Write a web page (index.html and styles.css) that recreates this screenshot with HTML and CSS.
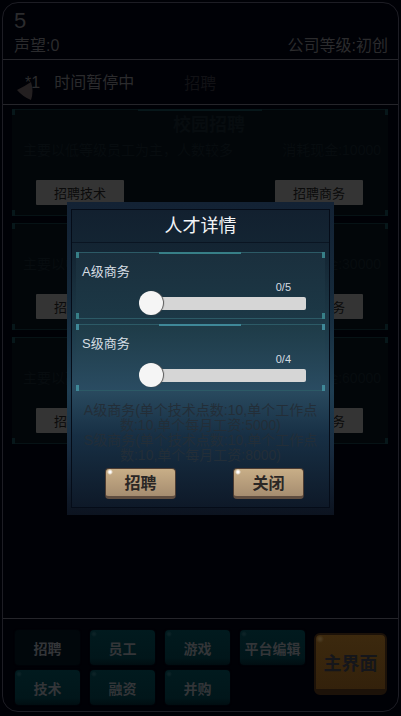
FILE: index.html
```html
<!DOCTYPE html>
<html lang="zh-CN">
<head>
    <meta charset="UTF-8">
    <meta name="viewport" content="width=device-width, initial-scale=1.0">
    <title>人才详情</title>
    <link rel="stylesheet" href="styles.css">
</head>
<body>
    <div class="game">
        <header class="status">
            <div class="money">5</div>
            <div class="status-row">
                <span>声望:0</span>
                <span>公司等级:初创</span>
            </div>
        </header>

        <div class="time-bar">
            <svg class="arrow" viewBox="0 0 16 18"><path d="M0 8 Q8 4 14 0 Q17 9 14 18 Q6 15 0 8 Z" fill="#231f20"/></svg>
            <span class="speed">*1</span>
            <span class="time-text">时间暂停中</span>
            <span class="page-name">招聘</span>
        </div>

        <main class="cards">
            <section class="card corners">
                <h2>校园招聘</h2>
                <p class="card-info"><span>主要以低等级员工为主，人数较多</span><span>消耗现金:10000</span></p>
                <div class="card-buttons">
                    <button type="button">招聘技术</button>
                    <button type="button">招聘商务</button>
                </div>
            </section>
            <section class="card corners">
                <h2>社会招聘</h2>
                <p class="card-info"><span>主要以中等级员工为主，人数较多</span><span>消耗现金:30000</span></p>
                <div class="card-buttons">
                    <button type="button">招聘技术</button>
                    <button type="button">招聘商务</button>
                </div>
            </section>
            <section class="card corners">
                <h2>猎头招聘</h2>
                <p class="card-info"><span>主要以高等级员工为主，人数较少</span><span>消耗现金:60000</span></p>
                <div class="card-buttons">
                    <button type="button">招聘技术</button>
                    <button type="button">招聘商务</button>
                </div>
            </section>
        </main>

        <nav class="menu">
            <div class="menu-grid">
                <button type="button" class="current">招聘</button>
                <button type="button">员工</button>
                <button type="button">游戏</button>
                <button type="button">平台编辑</button>
                <button type="button">技术</button>
                <button type="button">融资</button>
                <button type="button">并购</button>
            </div>
            <button type="button" class="home">主界面</button>
        </nav>
    </div>

    <div class="overlay">
        <div class="dialog" role="dialog" aria-labelledby="dialogTitle">
            <div class="dialog-inner">
                <h1 id="dialogTitle">人才详情</h1>
                <div class="level corners">
                    <label for="levelA">A级商务</label>
                    <output for="levelA" id="countA">0/5</output>
                    <input type="range" id="levelA" min="0" max="5" value="0">
                </div>
                <div class="level corners">
                    <label for="levelS">S级商务</label>
                    <output for="levelS" id="countS">0/4</output>
                    <input type="range" id="levelS" min="0" max="4" value="0">
                </div>
                <p class="note">A级商务(单个技术点数:10,单个工作点数:10,单个每月工资:5000)<br>S级商务(单个技术点数:10,单个工作点数:10,单个每月工资:8000)</p>
                <div class="dialog-buttons">
                    <button type="button">招聘</button>
                    <button type="button">关闭</button>
                </div>
            </div>
        </div>
    </div>

    <script>
        document.querySelectorAll('.level input').forEach(input => {
            input.addEventListener('input', () => {
                input.previousElementSibling.textContent = input.value + '/' + input.max;
            });
        });
    </script>
</body>
</html>
```
FILE: styles.css
```css
* {
    box-sizing: border-box;
}
body {
    margin: 0;
    background: #000106;
    color: #2b2b2d;
    font-family: "Liberation Sans", "Noto Sans CJK SC", sans-serif;
    font-size: 16px;
}
h1, h2, p {
    margin: 0;
    font-weight: normal;
}
button {
    font-family: inherit;
    padding: 0;
    border: none;
    cursor: pointer;
}

.game {
    display: flex;
    flex-direction: column;
    min-height: calc(100vh - 6px);
    margin: 2px 2px 4px;
    border: 1px solid #1d1d24;
    border-radius: 16px;
}

/* top */
.status {
    padding: 6px 10px 0 11px;
    border-bottom: 1px solid #25252a;
}
.money {
    font-size: 22px;
    line-height: 24px;
}
.status-row {
    display: flex;
    justify-content: space-between;
    line-height: 26px;
}
.time-bar {
    display: flex;
    height: 45px;
    padding-left: 14px;
    border-bottom: 1px solid #25252a;
    line-height: 46px;
}
.arrow {
    width: 16px;
    height: 18px;
    margin-top: 22px;
}
.speed {
    margin-left: -8px;
}
.time-text {
    margin-left: 14px;
}
.page-name {
    margin-left: 50px;
    line-height: 48px;
    color: #111115;
}

/* recruit cards */
.cards {
    flex: 1;
    display: flex;
    flex-direction: column;
    gap: 7px;
    padding: 4px 10px 4px 9px;
}
.corners {
    --corner: #377f87;
    --line: #2c5a66;
    --fill: none;
    background:
        linear-gradient(var(--corner), var(--corner)) left top / 3px 6px,
        linear-gradient(var(--corner), var(--corner)) right top / 3px 6px,
        linear-gradient(var(--corner), var(--corner)) left bottom / 3px 6px,
        linear-gradient(var(--corner), var(--corner)) right bottom / 3px 6px,
        linear-gradient(var(--corner), var(--corner)) center top / 33% 2px,
        linear-gradient(var(--line), var(--line)) left top / 100% 1px,
        linear-gradient(var(--line), var(--line)) left bottom / 100% 1px,
        var(--fill);
    background-repeat: no-repeat;
}
.card {
    --corner: #07171a;
    --line: #061215;
    --fill: linear-gradient(#020609, #020609);
    height: 107px;
    color: #070c0f;
}
.card h2 {
    padding: 4px 0 0 18px;
    font-size: 18px;
    font-weight: bold;
    line-height: 24px;
    text-align: center;
}
.card-info {
    display: flex;
    justify-content: space-between;
    padding: 3px 7px 0 11px;
    font-size: 14px;
    line-height: 20px;
    white-space: nowrap;
}
.card-buttons {
    display: flex;
    justify-content: space-between;
    padding: 20px 25px 0 24px;
}
.card-buttons button {
    width: 88px;
    height: 25px;
    border-radius: 1px;
    background: #343434;
    color: #0b0b0b;
    font-size: 13px;
}

/* bottom menu */
.menu {
    display: flex;
    justify-content: space-between;
    padding: 11px 11px 6px 12px;
    border-top: 1px solid #25252a;
}
.menu-grid {
    display: grid;
    grid-template-columns: repeat(4, 65px);
    gap: 5px 10px;
}
.menu button {
    height: 35px;
    border-radius: 4px;
    background: radial-gradient(circle at 4px 4px, #0c2226 1px, transparent 3px), linear-gradient(#011a1e, #01161a 80%, #010d11);
    box-shadow: 0 0 2px #010a0d;
    color: #333538;
    font-size: 14px;
    font-weight: bold;
    white-space: nowrap;
}
.menu .current {
    background: #01070b;
}
.menu .home {
    width: 73px;
    height: 62px;
    margin-top: 3px;
    border: 2px solid #1c1209;
    border-bottom: 6px solid #1c1209;
    border-radius: 6px;
    background: radial-gradient(circle at 4px 4px, #4c3c22 1px, transparent 4px), linear-gradient(#3c290e, #33210b);
    box-shadow: none;
    color: #15161b;
    font-size: 18px;
}

/* dialog */
.overlay {
    position: fixed;
    inset: 0;
    display: flex;
    align-items: center;
    justify-content: center;
    padding: 0 67px;
}
.dialog {
    width: 100%;
    padding: 7px 4px;
    background: linear-gradient(#132234, #15293a 30%, #1f3e52 60%, #172a3e 80%, #0c131f);
}
.dialog-inner {
    padding: 0 4px 8px;
    border: 1px solid #050c18;
    background: linear-gradient(#12202f, #142634 15%, #1d3a48 40%, #2a4b60 60%, #172f44 76%, #0e1928);
}
.dialog h1 {
    margin: 0 -4px 9px;
    border-bottom: 1px solid #0a1522;
    color: #f2f4f6;
    font-size: 18px;
    line-height: 32px;
    text-align: center;
}
.level {
    --fill: linear-gradient(#1a2f3d, #1c3846);
    display: flex;
    flex-direction: column;
    align-items: flex-end;
    height: 67px;
    margin-bottom: 5px;
    padding: 12px 19px 0 6px;
}
.level + .level {
    --corner: #3f8898;
    --fill: linear-gradient(#1e3b47, #2a4c62);
}
.level label {
    align-self: flex-start;
    color: #d5dde3;
    font-size: 13px;
    line-height: 16px;
}
.level output {
    margin-right: 15px;
    color: #d5dde3;
    font-size: 11px;
    line-height: 14px;
}
.level input {
    appearance: none;
    width: 167px;
    height: 20px;
    margin: 0;
    background: none;
}
.level input::-webkit-slider-runnable-track {
    height: 13px;
    border-radius: 2px;
    background: linear-gradient(to right, transparent 8px, #d6d6d6 8px);
}
.level input::-webkit-slider-thumb {
    appearance: none;
    width: 24px;
    height: 24px;
    margin-top: -6px;
    border-radius: 50%;
    background: #f5f5f5;
    box-shadow: 1px 0 1px #555;
}
.note {
    padding: 7px 6px 0;
    color: #232e38;
    font-size: 14px;
    line-height: 15px;
    text-align: center;
}
.dialog-buttons {
    display: flex;
    justify-content: space-between;
    padding: 5px 21px 0 29px;
}
.dialog-buttons button {
    width: 71px;
    height: 31px;
    border: 1px solid #4c3c32;
    border-bottom: 3px solid #5f4d40;
    border-radius: 4px;
    background: radial-gradient(circle at 4px 3px, #fff 1px, transparent 3px), linear-gradient(#c8ae87, #a68d70);
    color: #2b2725;
    font-size: 16px;
    font-weight: bold;
}
```
